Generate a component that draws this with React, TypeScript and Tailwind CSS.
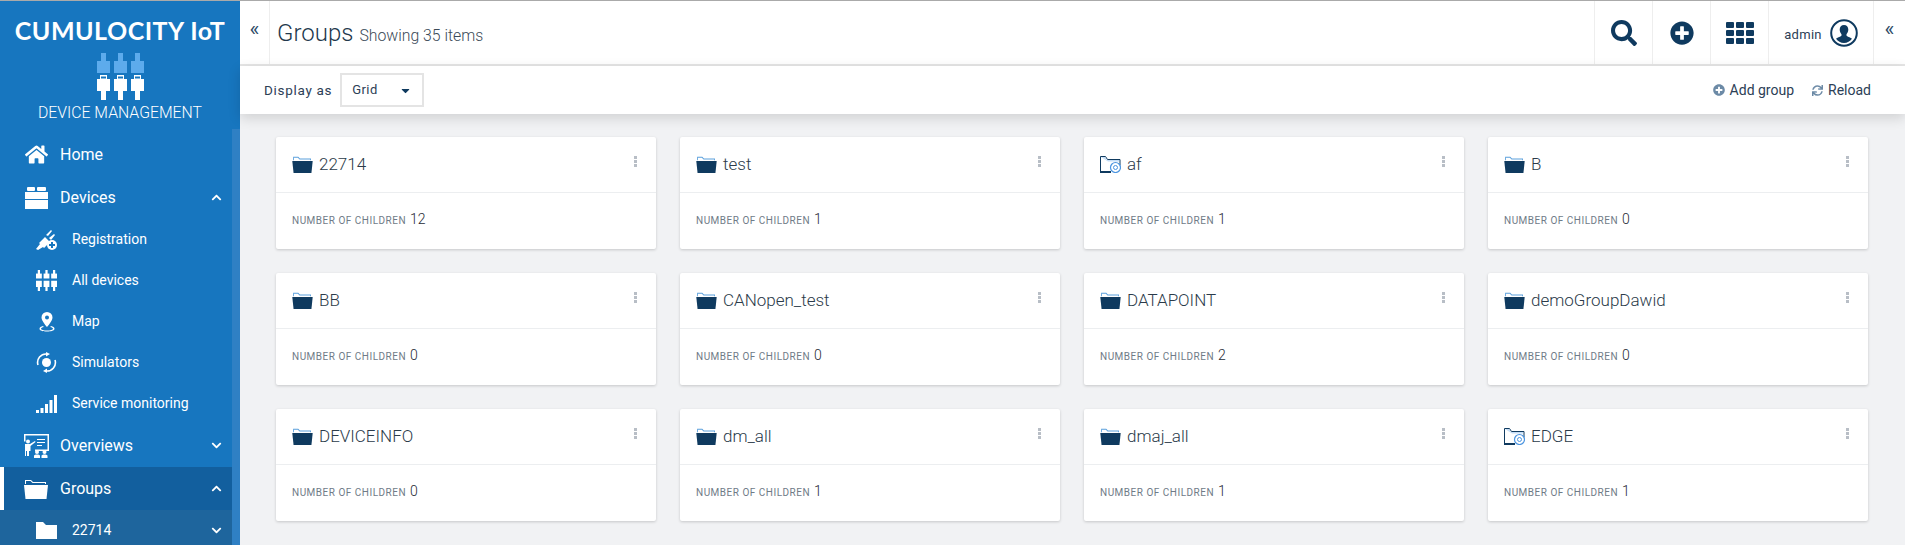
import type { ReactNode } from "react";
import { FaHome, FaSearch, FaPlusCircle, FaSync, FaChevronUp, FaChevronDown, FaCaretDown } from "react-icons/fa";

const groups = [
  { name: "22714", count: 12 },
  { name: "test", count: 1 },
  { name: "af", count: 1, smart: true },
  { name: "B", count: 0 },
  { name: "BB", count: 0 },
  { name: "CANopen_test", count: 0 },
  { name: "DATAPOINT", count: 2 },
  { name: "demoGroupDawid", count: 0 },
  { name: "DEVICEINFO", count: 0 },
  { name: "dm_all", count: 1 },
  { name: "dmaj_all", count: 1 },
  { name: "EDGE", count: 1, smart: true },
];

function DevicesLogo() {
  return (
    <svg width="47" height="47" viewBox="0 0 47 47">
      {[0, 17, 34].map((x) => (
        <g key={x}>
          <rect x={x + 4} y="0" width="5" height="9" fill="#5dabec" />
          <rect x={x} y="8" width="13" height="12" fill="#5dabec" />
          <path fill="#fff" fillRule="evenodd" d={`M${x} 26h3v-4h7v4h3v12h-4v9h-5v-9h-4z M${x + 4} 23.5h5v2h-5z`} />
        </g>
      ))}
    </svg>
  );
}

function SmallDevices() {
  return (
    <svg width="21" height="21" viewBox="0 0 47 47">
      {[0, 17, 34].map((x) => (
        <g key={x} fill="#fff">
          <rect x={x + 4} y="0" width="5" height="9" />
          <rect x={x} y="8" width="13" height="11" />
          <path d={`M${x} 24h13v14h-4v9h-5v-9h-4z`} />
        </g>
      ))}
    </svg>
  );
}

function DevicesIcon() {
  return (
    <svg width="23" height="22" viewBox="0 0 23 22" fill="#fff">
      <rect x="2" y="0" width="8" height="4" rx="1" />
      <rect x="12" y="0" width="9" height="4" rx="1" />
      <rect x="0" y="5" width="23" height="7" />
      <rect x="0" y="13" width="23" height="9" />
    </svg>
  );
}

function PlugPlus() {
  return (
    <svg width="21" height="20" viewBox="0 0 21 20" fill="#fff">
      <path d="M0 19l4-5-1-1 6-6 5 5-6 6-1-1-5 3z" />
      <path d="M10 5l5-5 1 1-4 5zM13 8l5-4 1 1-4 5z" />
      <circle cx="16" cy="15" r="5" />
      <path d="M15 12h2v2h2v2h-2v2h-2v-2h-2v-2h2z" fill="#1776bf" />
    </svg>
  );
}

function MapPin() {
  return (
    <svg width="16" height="20" viewBox="0 0 16 20" fill="#fff">
      <path fillRule="evenodd" d="M8 0a5.5 5.5 0 0 1 5.5 5.5C13.5 9 8 15 8 15S2.5 9 2.5 5.5A5.5 5.5 0 0 1 8 0zm0 3.5a2 2 0 1 0 0 4 2 2 0 0 0 0-4z" />
      <path d="M4 14c-2 .6-3.5 1.4-3.5 2.800C.5 18.600 4 19.600 8 19.600s7.500-1 7.500-2.800c0-1.400-1.500-2.200-3.500-2.800l-.8 1c1.600.4 2.800 1 2.800 1.800 0 1-2.800 1.800-6 1.800s-6-.8-6-1.800c0-.8 1.200-1.400 2.800-1.800z" />
    </svg>
  );
}

function SimIcon() {
  return (
    <svg width="21" height="21" viewBox="0 0 21 21">
      <circle cx="10.5" cy="10.5" r="4.5" fill="#fff" />
      <path d="M2 13A8.500 8.500 0 0 1 11 2M19 8a8.500 8.500 0 0 1-9 11" fill="none" stroke="#fff" strokeWidth="1.6" />
      <path d="M10 0l4 2-4 2.500zM11 21l-4-2 4-2.500z" fill="#fff" />
    </svg>
  );
}

function BarsIcon() {
  return (
    <svg width="21" height="18" viewBox="0 0 21 18" fill="#fff">
      <rect x="0" y="15" width="3" height="3" />
      <rect x="4.5" y="13" width="3" height="5" />
      <rect x="9" y="9" width="3" height="9" />
      <rect x="13.5" y="5" width="3" height="13" />
      <rect x="18" y="0" width="3" height="18" />
    </svg>
  );
}

function OverviewIcon() {
  return (
    <svg width="25" height="24" viewBox="0 0 25 24" fill="#fff">
      <path fillRule="evenodd" d="M0 0h25v17H11v-1.500h12.500v-14h-22v6H0z" />
      <path d="M13 5h8v1h-8zM13 8h8v1h-8zM13 11h5v1h-5z" />
      <circle cx="4" cy="7.5" r="2" />
      <path d="M1 10h5l5-3 .5 1-5 4v5H5v5H3v-5H2v5H1z" />
      <circle cx="13" cy="18" r="2" />
      <circle cx="20.5" cy="18" r="2" />
      <path d="M10 24v-2c0-1 1-1.500 3-1.500s3 .5 3 1.500v2zM17.500 24v-2c0-1 1-1.500 3-1.500s3 .5 3 1.500v2z" />
    </svg>
  );
}

function OpenFolder({ color, tab, w = 24, h = 20 }: { color: string; tab: string; w?: number; h?: number }) {
  return (
    <svg width={w} height={h} viewBox="0 0 24 20">
      <path d="M1 5V1h6l2 2h13v2h-1V4H8.500l-2-2H2v3z" fill={tab} />
      <path d="M0 6h24l-1.500 14h-21z" fill={color} />
    </svg>
  );
}

function SolidFolder() {
  return (
    <svg width="21" height="17" viewBox="0 0 21 17" fill="#fff">
      <path d="M0 0h7l3 3h11v14H0z" />
    </svg>
  );
}

function SmartFolder() {
  return (
    <svg width="21" height="17" viewBox="0 0 21 17">
      <path d="M.5 16.500V.5h5l2 3H20v6" fill="none" stroke="#0f3a5f" strokeWidth="1" />
      <path d="M0 15h11v2H0z" fill="#0f3a5f" />
      <path d="M1 1h4l2 3h12v1.500H8z" fill="#9cc6f0" opacity=".6" />
      <circle cx="15.500" cy="11.500" r="5" fill="#fff" stroke="#4c95e0" strokeWidth="1.2" />
      <circle cx="15.500" cy="11.500" r="2" fill="none" stroke="#4c95e0" strokeWidth="1" />
    </svg>
  );
}

function GridIcon() {
  return (
    <svg width="28" height="22" viewBox="0 0 28 22" fill="#0f3a5f">
      {[0, 8, 16].map((y) =>
        [0, 10, 20].map((x) => <rect key={`${x}-${y}`} x={x} y={y} width="8" height="6" rx="1" />)
      )}
    </svg>
  );
}

function UserIcon() {
  return (
    <svg width="28" height="28" viewBox="0 0 28 28">
      <circle cx="14" cy="14" r="12.8" fill="#fff" stroke="#0f3a5f" strokeWidth="2" />
      <path d="M14 6c2.700 0 4.300 2 4.300 4.600 0 2-.9 3.500-1.800 4.600v1.300c0 1 3.800 1.800 5.500 3.300A10 10 0 0 1 14 24a10 10 0 0 1-8-4.200c1.700-1.500 5.500-2.300 5.500-3.300v-1.300c-.9-1.100-1.800-2.600-1.800-4.600C9.700 8 11.300 6 14 6z" fill="#0f3a5f" />
    </svg>
  );
}

function NavRow({ icon, label, chevron, active }: { icon: ReactNode; label: string; chevron?: "up" | "down"; active?: boolean }) {
  return (
    <div className={`flex h-[43px] items-center border-l-4 pr-[10px] pl-[16px] ${active ? "border-white bg-[#125f9e]" : "border-transparent"}`}>
      <span className="-ml-[2px] flex w-[40px] shrink-0 justify-center pr-[4px]">{icon}</span>
      <span className="ml-[2px] flex-1 text-[16px] text-white">{label}</span>
      {chevron === "up" && <FaChevronUp className="text-[11px] text-white" />}
      {chevron === "down" && <FaChevronDown className="text-[11px] text-white" />}
    </div>
  );
}

function SubRow({ icon, label, chevron, dark }: { icon: ReactNode; label: string; chevron?: boolean; dark?: boolean }) {
  return (
    <div className={`flex h-[41px] items-center pr-[10px] pl-[36px] ${dark ? "bg-[#1e659d]" : ""}`}>
      <span className="flex w-[21px] shrink-0 justify-center">{icon}</span>
      <span className="ml-[15px] flex-1 text-[14px] text-white">{label}</span>
      {chevron && <FaChevronDown className="text-[11px] text-white" />}
    </div>
  );
}

function GroupCard({ name, count, smart }: { name: string; count: number; smart?: boolean }) {
  return (
    <div className="h-[112px] rounded-[2px] bg-white shadow-[0_1px_3px_rgba(0,0,0,0.18)]">
      <div className="relative flex h-[56px] items-center border-b border-[#eceef0] pb-[1px] pl-[16px]">
        {smart ? <SmartFolder /> : <OpenFolder color="#0f3a5f" tab="#5a9fdc" w={21} h={17} />}
        <span className="ml-[6px] pt-[2px] text-[17px] font-light text-[#2b3b4a]">{name}</span>
        <span className="absolute top-[19px] right-[19px] flex flex-col gap-[1px]">
          <i className="h-[3px] w-[3px] bg-[#b8bec6]" />
          <i className="h-[3px] w-[3px] bg-[#b8bec6]" />
          <i className="h-[3px] w-[3px] bg-[#b8bec6]" />
        </span>
      </div>
      <div className="flex items-baseline pt-[16px] pl-[16px]">
        <span className="text-[10px] tracking-[0.5px] text-[#6f7b87]">NUMBER OF CHILDREN</span>
        <span className="ml-[4px] text-[14px] font-light text-[#1f2b36]">{count}</span>
      </div>
    </div>
  );
}

function HeaderCell({ children }: { children: ReactNode }) {
  return <div className="flex w-[58px] items-center justify-center border-l border-[#eeeeee]">{children}</div>;
}

export default function App() {
  return (
    <div className="flex h-[545px] w-[1905px] overflow-hidden bg-[#f1f2f4] font-['Roboto',sans-serif]">
      <aside className="flex w-[240px] shrink-0 flex-col border-t border-[#aaaaaa] bg-[#1776bf]">
        <div className="flex h-[128px] shrink-0 flex-col items-center">
          <div className="mt-[14px] font-['Lato',sans-serif] text-[25px] leading-[30px] font-bold tracking-[0.5px] whitespace-nowrap text-white">CUMULOCITY IoT</div>
          <div className="mt-[8px] flex h-[47px]"><DevicesLogo /></div>
          <div className="mt-[3px] text-[15.8px] leading-[20px] font-light whitespace-nowrap text-white">DEVICE MANAGEMENT</div>
        </div>
        <div className="flex flex-1">
          <nav className="w-[232px] pt-[4px]">
            <NavRow icon={<FaHome className="text-[23px] text-white" />} label="Home" />
            <NavRow icon={<DevicesIcon />} label="Devices" chevron="up" />
            <SubRow icon={<PlugPlus />} label="Registration" />
            <SubRow icon={<SmallDevices />} label="All devices" />
            <SubRow icon={<MapPin />} label="Map" />
            <SubRow icon={<SimIcon />} label="Simulators" />
            <SubRow icon={<BarsIcon />} label="Service monitoring" />
            <NavRow icon={<OverviewIcon />} label="Overviews" chevron="down" />
            <NavRow icon={<OpenFolder color="#fff" tab="#fff" />} label="Groups" chevron="up" active />
            <SubRow icon={<SolidFolder />} label="22714" chevron dark />
          </nav>
          <div className="w-[8px] bg-[#2f80c4]" />
        </div>
      </aside>

      <main className="flex min-w-0 flex-1 flex-col">
        <header className="flex h-[66px] shrink-0 border-t border-b-2 border-t-[#aaaaaa] border-b-[#e6e6e6] bg-white">
          <div className="flex w-[30px] items-center justify-center border-r border-[#eeeeee] pb-[6px] text-[21px] text-[#2c4a66]">«</div>
          <div className="ml-[7px] flex flex-1 items-baseline pt-[17px]">
            <span className="text-[24px] leading-[30px] font-light text-[#22384d]">Groups</span>
            <span className="ml-[6px] text-[15.8px] font-light text-[#3b4a58]">Showing 35 items</span>
          </div>
          <HeaderCell><FaSearch className="text-[26px] text-[#0f3a5f]" /></HeaderCell>
          <HeaderCell><FaPlusCircle className="text-[24px] text-[#0f3a5f]" /></HeaderCell>
          <HeaderCell><GridIcon /></HeaderCell>
          <div className="flex w-[105px] items-center justify-center gap-[8px] border-l border-[#eeeeee]">
            <span className="pt-[5px] text-[13px] tracking-[0.3px] text-[#2c4056]">admin</span>
            <UserIcon />
          </div>
          <div className="flex w-[32px] items-center justify-center border-l border-[#eeeeee] pb-[6px] text-[21px] text-[#2c4a66]">«</div>
        </header>

        <div className="relative z-10 flex h-[48px] shrink-0 items-center bg-white pr-[34px] pl-[24px] shadow-[0_4px_12px_rgba(0,0,0,0.14)]">
          <span className="text-[13.5px] tracking-[0.7px] text-[#2c4056]">Display as</span>
          <div className="ml-[8px] flex h-[34px] w-[84px] items-center justify-between border-2 border-[#e4e4e4] px-[10px]">
            <span className="text-[13px] tracking-[0.4px] text-[#2c4056]">Grid</span>
            <FaCaretDown className="text-[13px] text-[#0f3a5f]" />
          </div>
          <div className="ml-auto flex items-center gap-[18px] text-[14px] text-[#2c4056]">
            <span className="flex items-center gap-[5px]"><FaPlusCircle className="text-[12px] text-[#6c8aa6]" />Add group</span>
            <span className="flex items-center gap-[5px]"><FaSync className="text-[11px] text-[#6c8aa6]" />Reload</span>
          </div>
        </div>

        <div className="grid grid-cols-4 gap-[24px] pt-[23px] pr-[37px] pl-[36px]">
          {groups.map((g) => (
            <GroupCard key={g.name} name={g.name} count={g.count} smart={g.smart} />
          ))}
        </div>
      </main>
    </div>
  );
}
